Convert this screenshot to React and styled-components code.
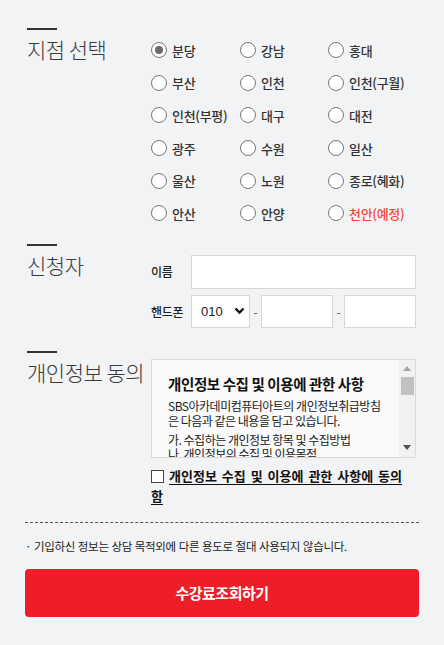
import React, { useState } from "react";
import styled, { createGlobalStyle } from "styled-components";

const GlobalStyle = createGlobalStyle`
  html, body {
    margin: 0;
    padding: 0;
    background: #f2f3f5;
  }
  body {
    font-family: "Noto Sans CJK KR", "Noto Sans", sans-serif;
    color: #222;
  }
  * { box-sizing: border-box; }
`;

const Page = styled.div`
  width: 394px;
  margin: 0 25px;
  padding: 28px 0 28px;
`;

const Section = styled.div`
  display: grid;
  grid-template-columns: 126px minmax(0, 1fr);
  margin-bottom: ${(p) => p.gap || 0}px;
`;

const Side = styled.div`
  padding-left: 2px;
`;

const Bar = styled.div`
  width: 30px;
  height: 2px;
  background: #333;
`;

const Heading = styled.h2`
  margin: 5px 0 0;
  font-size: 21px;
  line-height: 28px;
  font-weight: 300;
  color: #3a3a3a;
  white-space: nowrap;
  letter-spacing: -0.5px;
`;

const Body = styled.div`
  min-width: 0;
  padding-top: ${(p) => p.top || 0}px;
  padding-right: 3px;
`;

const RadioGrid = styled.div`
  display: grid;
  grid-template-columns: 89px 88px 1fr;
  grid-auto-rows: 32.6px;
  align-items: center;
`;

const RadioLabel = styled.label`
  display: flex;
  align-items: center;
  gap: 5px;
  font-size: 13px;
  font-weight: 500;
  color: ${(p) => (p.soon ? "#f24b3c" : "#333")};
  white-space: nowrap;
  letter-spacing: -0.3px;
  cursor: pointer;
`;

const RadioDot = styled.input.attrs({ type: "radio" })`
  appearance: none;
  margin: 0;
  width: 16px;
  height: 16px;
  flex: none;
  border: 1px solid #767676;
  border-radius: 50%;
  background: #fff;
  display: grid;
  place-items: center;
  &:checked::after {
    content: "";
    width: 8px;
    height: 8px;
    border-radius: 50%;
    background: #6b6b6b;
  }
`;

const FieldRow = styled.div`
  display: flex;
  align-items: center;
  margin-bottom: ${(p) => p.gap || 0}px;
`;

const FieldLabel = styled.span`
  width: 40px;
  flex: none;
  font-size: 12px;
  font-weight: 500;
  color: #222;
  white-space: nowrap;
  letter-spacing: -0.3px;
`;

const TextInput = styled.input`
  height: ${(p) => p.h || 34}px;
  width: ${(p) => (p.w ? `${p.w}px` : "0")};
  min-width: 0;
  flex: ${(p) => (p.w ? "none" : 1)};
  border: 1px solid #d6d6d6;
  background: #fff;
  margin: 0;
  padding: 0 8px;
  font-size: 13px;
  outline: none;
`;

const SelectWrap = styled.div`
  position: relative;
  width: 59px;
  height: 33px;
  flex: none;
`;

const Select = styled.select`
  appearance: none;
  width: 100%;
  height: 100%;
  border: 1px solid #d6d6d6;
  background: #fff;
  padding: 0 0 0 9px;
  font-family: "Liberation Sans", Arial, sans-serif;
  font-size: 13px;
  color: #222;
  outline: none;
`;

const Chevron = styled.svg`
  position: absolute;
  right: 5px;
  top: 12px;
  pointer-events: none;
`;

const Dash = styled.span`
  width: 11px;
  flex: none;
  text-align: center;
  font-size: 12px;
  color: #555;
`;

const ScrollBox = styled.div`
  display: flex;
  height: 99px;
  border: 1px solid #d9d9d9;
  background: #fafafa;
`;

const BoxContent = styled.div`
  flex: 1;
  min-width: 0;
  overflow: hidden;
  padding: 14px 12px 0 16px;
`;

const BoxTitle = styled.h3`
  margin: 0 0 4px;
  font-size: 14.5px;
  line-height: 20px;
  font-weight: 700;
  color: #111;
  letter-spacing: -0.4px;
  white-space: nowrap;
`;

const BoxText = styled.p`
  margin: 0 0 5px;
  font-size: 12px;
  line-height: ${(p) => p.lh || 15}px;
  color: #222;
  letter-spacing: -0.5px;
`;

const Track = styled.div`
  width: 16px;
  flex: none;
  background: #f1f1f1;
  display: flex;
  flex-direction: column;
  align-items: center;
  padding: 1px 0;
`;

const Arrow = styled.div`
  height: 16px;
  display: grid;
  place-items: center;
`;

const Thumb = styled.div`
  width: 13px;
  height: 18px;
  background: #c1c1c1;
`;

const Spacer = styled.div`
  flex: 1;
`;

const AgreeRow = styled.label`
  display: block;
  margin-top: 8px;
  font-size: 13px;
  line-height: 20px;
  font-weight: 700;
  color: #111;
  text-decoration: underline;
  text-underline-offset: 3px;
  word-spacing: 2px;
  padding-right: 3px;
`;

const CheckBox = styled.input.attrs({ type: "checkbox" })`
  appearance: none;
  margin: 0 5px 0 0;
  width: 13px;
  height: 13px;
  border: 1px solid #444;
  background: #fff;
  vertical-align: -2px;
`;

const Divider = styled.hr`
  margin: 16px 0 0;
  border: none;
  border-top: 1px dashed #555;
`;

const Notice = styled.p`
  margin: 14px 0 0;
  font-size: 11.5px;
  line-height: 18px;
  color: #222;
  letter-spacing: -0.3px;
  word-spacing: 0.5px;
`;

const SubmitButton = styled.button`
  display: block;
  width: 100%;
  height: 48px;
  margin-top: 14px;
  border: none;
  border-radius: 4px;
  background: #ef1d28;
  color: #fff;
  font-family: "Noto Sans CJK KR", sans-serif;
  font-size: 15px;
  font-weight: 700;
  letter-spacing: -0.5px;
  cursor: pointer;
`;

const branches = [
  "분당", "강남", "홍대",
  "부산", "인천", "인천(구월)",
  "인천(부평)", "대구", "대전",
  "광주", "수원", "일산",
  "울산", "노원", "종로(혜화)",
  "안산", "안양", "천안(예정)",
];

const App = () => {
  const [branch, setBranch] = useState("분당");
  const [agree, setAgree] = useState(false);

  return (
    <>
      <GlobalStyle />
      <Page>
        <Section gap={14}>
          <Side>
            <Bar />
            <Heading>지점 선택</Heading>
          </Side>
          <Body top={6}>
            <RadioGrid>
              {branches.map((b) => (
                <RadioLabel key={b} soon={b === "천안(예정)"}>
                  <RadioDot
                    name="branch"
                    checked={branch === b}
                    onChange={() => setBranch(b)}
                  />
                  {b}
                </RadioLabel>
              ))}
            </RadioGrid>
          </Body>
        </Section>

        <Section gap={23}>
          <Side>
            <Bar />
            <Heading>신청자</Heading>
          </Side>
          <Body top={11}>
            <FieldRow gap={6}>
              <FieldLabel>이름</FieldLabel>
              <TextInput />
            </FieldRow>
            <FieldRow>
              <FieldLabel>핸드폰</FieldLabel>
              <SelectWrap>
                <Select defaultValue="010">
                  <option>010</option>
                  <option>011</option>
                  <option>016</option>
                  <option>017</option>
                  <option>018</option>
                  <option>019</option>
                </Select>
                <Chevron width="11" height="8" viewBox="0 0 11 8">
                  <path d="M1.5 1.5 L5.5 5.5 L9.5 1.5" fill="none" stroke="#111" strokeWidth="2.4" />
                </Chevron>
              </SelectWrap>
              <Dash>-</Dash>
              <TextInput w={72} h={33} />
              <Dash>-</Dash>
              <TextInput h={33} />
            </FieldRow>
          </Body>
        </Section>

        <Section>
          <Side>
            <Bar />
            <Heading>개인정보 동의</Heading>
          </Side>
          <Body top={8}>
            <ScrollBox>
              <BoxContent>
                <BoxTitle>개인정보 수집 및 이용에 관한 사항</BoxTitle>
                <BoxText>SBS아카데미컴퓨터아트의 개인정보취급방침은 다음과 같은 내용을 담고 있습니다.</BoxText>
                <BoxText lh={14}>
                  가. 수집하는 개인정보 항목 및 수집방법
                  <br />
                  나. 개인정보의 수집 및 이용목적
                </BoxText>
              </BoxContent>
              <Track>
                <Arrow>
                  <svg width="8" height="5" viewBox="0 0 8 5">
                    <path d="M0 5 L4 0 L8 5 Z" fill="#a3a3a3" />
                  </svg>
                </Arrow>
                <Thumb />
                <Spacer />
                <Arrow>
                  <svg width="8" height="5" viewBox="0 0 8 5">
                    <path d="M0 0 L8 0 L4 5 Z" fill="#505050" />
                  </svg>
                </Arrow>
              </Track>
            </ScrollBox>
            <AgreeRow>
              <CheckBox checked={agree} onChange={() => setAgree(!agree)} />
              개인정보 수집 및 이용에 관한 사항에 동의함
            </AgreeRow>
          </Body>
        </Section>

        <Divider />
        <Notice>· 기입하신 정보는 상담 목적외에 다른 용도로 절대 사용되지 않습니다.</Notice>
        <SubmitButton type="button">수강료조회하기</SubmitButton>
      </Page>
    </>
  );
};

export default App;
